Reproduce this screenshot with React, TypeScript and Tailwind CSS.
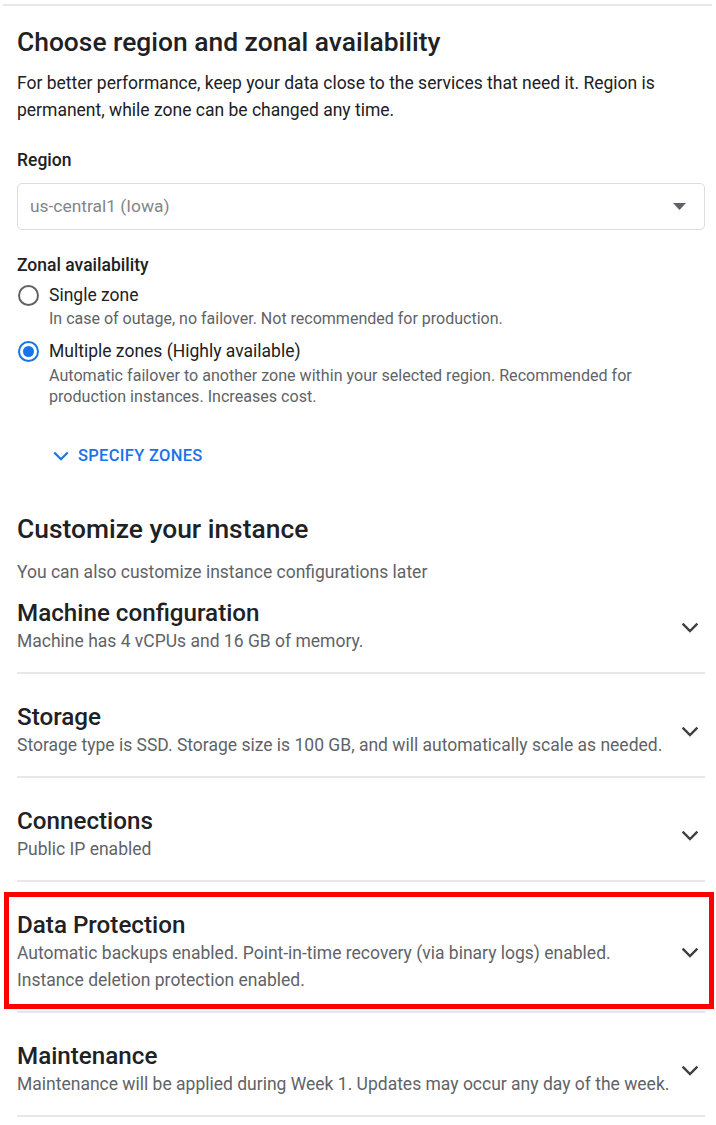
import React from "react";

const SECTIONS = [
  { title: "Machine configuration", lines: ["Machine has 4 vCPUs and 16 GB of memory."] },
  {
    title: "Storage",
    lines: ["Storage type is SSD. Storage size is 100 GB, and will automatically scale as needed."],
  },
  { title: "Connections", lines: ["Public IP enabled"] },
  {
    title: "Data Protection",
    lines: [
      "Automatic backups enabled. Point-in-time recovery (via binary logs) enabled.",
      "Instance deletion protection enabled.",
    ],
    highlight: true,
  },
  {
    title: "Maintenance",
    lines: ["Maintenance will be applied during Week 1. Updates may occur any day of the week."],
  },
];

function Chevron({ className }: { className?: string }) {
  return (
    <svg width="18" height="11" viewBox="0 0 18 11" className={className} fill="none">
      <polyline points="1.6,1.6 9,9 16.4,1.6" stroke="currentColor" strokeWidth="2.4" />
    </svg>
  );
}

function Radio({ checked }: { checked?: boolean }) {
  return (
    <span
      className={
        "mt-[2px] flex h-[21px] w-[21px] shrink-0 items-center justify-center rounded-full border-2 " +
        (checked ? "border-[#1a73e8]" : "border-[#5f6368]")
      }
    >
      {checked && <span className="h-[11px] w-[11px] rounded-full bg-[#1a73e8]" />}
    </span>
  );
}

export default function App() {
  return (
    <div className="min-h-[1125px] w-[716px] bg-white pt-[4px] font-['Roboto','Liberation_Sans',sans-serif] text-[#202124]">
      {/* top rule */}
      <div className="ml-[3px] mr-[4px] h-[2px] bg-[#e8e8e8]" />

      <div className="pl-[17px] pr-[11px]">
        {/* Region */}
        <h2 className="mt-[20px] text-[26.4px] font-medium leading-[32px]">Choose region and zonal availability</h2>
        <p className="mt-[12px] text-[17.5px] leading-[27px] text-[#202124]">
          For better performance, keep your data close to the services that need it. Region is permanent, while
          zone can be changed any time.
        </p>

        <div className="mt-[24px] text-[17.5px] font-medium leading-[24px]">Region</div>
        <div className="mt-[11px] flex h-[47px] items-center justify-between rounded-[5px] border border-[#dadce0] pl-[12px] pr-[18px]">
          <span className="text-[17.4px] text-[#80868b]">us-central1 (Iowa)</span>
          <svg width="13" height="7" viewBox="0 0 13 7">
            <polygon points="0,0 13,0 6.5,7" fill="#5f6368" />
          </svg>
        </div>

        <div className="mt-[23px] text-[17.5px] font-medium leading-[24px]">Zonal availability</div>

        <div className="mt-[6px] flex gap-[10px] pl-[1px]">
          <Radio />
          <div>
            <div className="text-[17.5px] leading-[24px]">Single zone</div>
            <div className="mt-[2px] text-[16px] leading-[20px] text-[#5f6368]">
              In case of outage, no failover. Not recommended for production.
            </div>
          </div>
        </div>

        <div className="mt-[10px] flex gap-[10px] pl-[1px]">
          <Radio checked />
          <div>
            <div className="text-[17.5px] leading-[24px]">Multiple zones (Highly available)</div>
            <div className="mt-[2px] w-[610px] text-[16.1px] leading-[21px] text-[#5f6368]">
              Automatic failover to another zone within your selected region. Recommended for production
              instances. Increases cost.
            </div>
          </div>
        </div>

        <button className="ml-[35px] mt-[39px] flex items-center gap-[8px] text-[16.5px] font-medium leading-[20px] tracking-[0.3px] text-[#1a73e8]">
          <Chevron className="h-[10px] w-[18px]" />
          SPECIFY ZONES
        </button>

        {/* Customize */}
        <h2 className="mt-[47px] text-[26.4px] font-medium leading-[32px]">Customize your instance</h2>
        <p className="mt-[17px] text-[17.5px] leading-[20px] text-[#5f6368]">
          You can also customize instance configurations later
        </p>

        <div className="mt-[-12px]">
          {SECTIONS.map((s) => (
            <div key={s.title} className="relative">
              <div className="flex items-center justify-between pb-[17px] pt-[29px]">
                <div>
                  <div className="text-[24.2px] font-medium leading-[28px]">{s.title}</div>
                  <div className="mt-[1px] text-[17.5px] leading-[27px] text-[#5f6368]">
                    {s.lines.map((l) => (
                      <div key={l}>{l}</div>
                    ))}
                  </div>
                </div>
                <Chevron className="mr-[6px] shrink-0 text-[#3c4043]" />
              </div>
              <div className="h-[2px] bg-[#e8e8e8]" />
              {s.highlight && (
                <div className="absolute bottom-[4px] left-[-13px] right-[-9px] top-[10px] border-[5px] border-[#ff0000]" />
              )}
            </div>
          ))}
        </div>
      </div>
    </div>
  );
}
